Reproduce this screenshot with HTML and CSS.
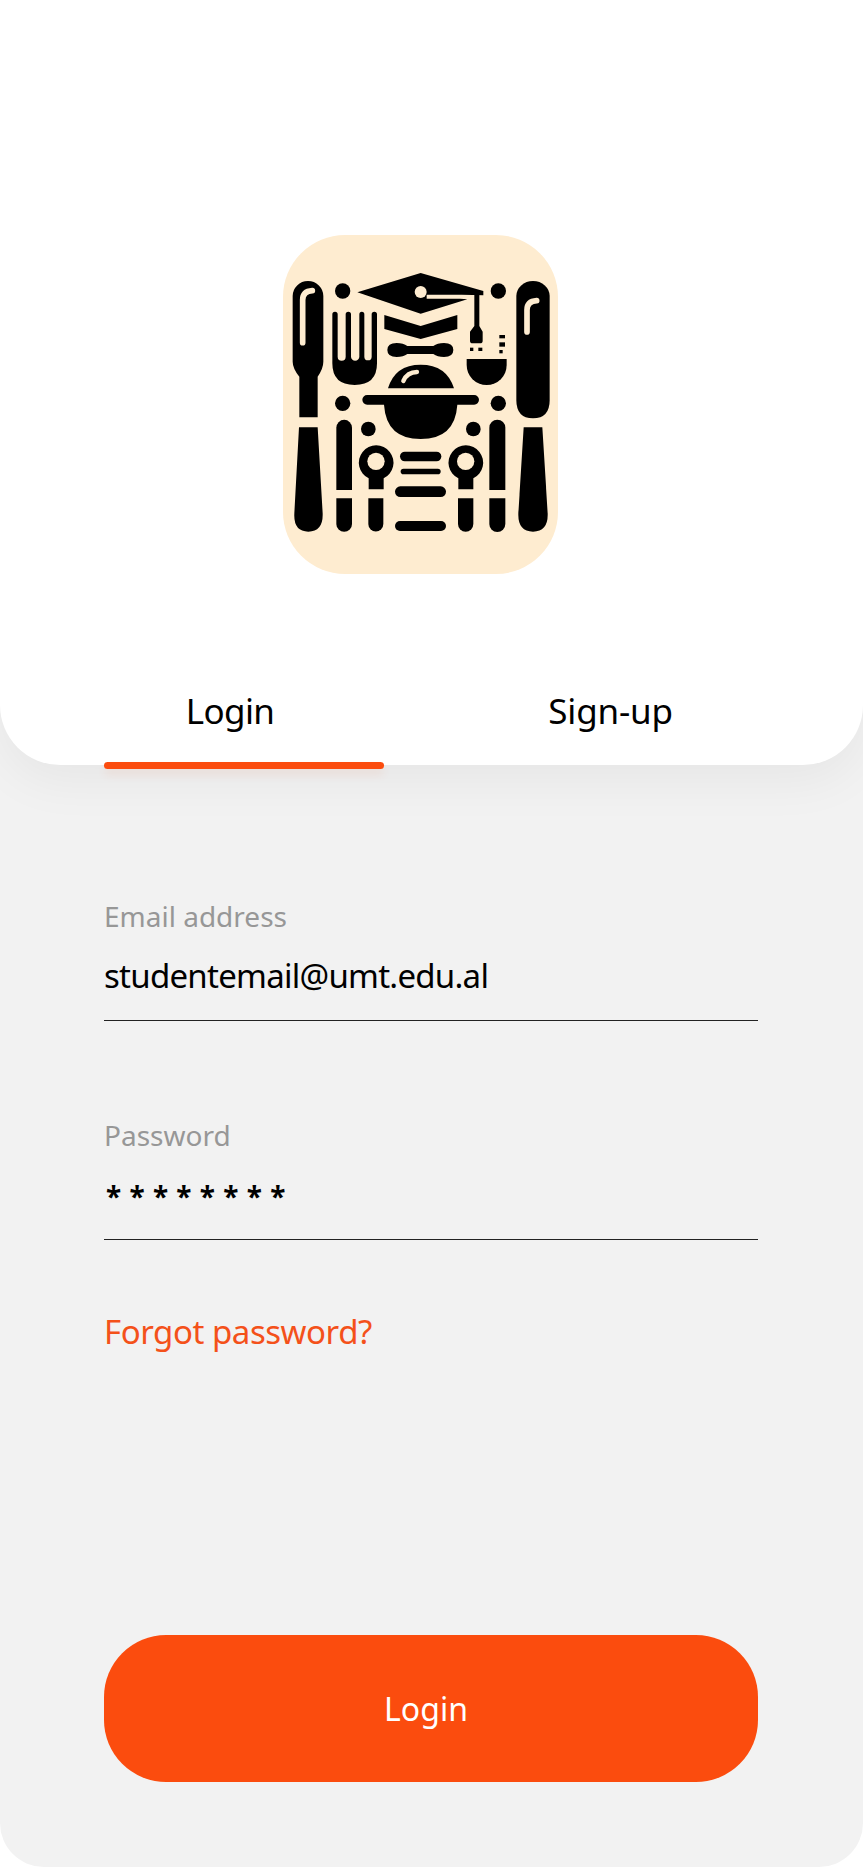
FILE: index.html
```html
<!DOCTYPE html>
<html lang="en">
<head>
<meta charset="utf-8">
<title>Login</title>
<link rel="stylesheet" href="styles.css">
</head>
<body>
<main class="screen">
  <header class="top-card">
    <div class="logo">
      <svg class="logo-art" viewBox="40 45 823 1017" xmlns="http://www.w3.org/2000/svg" aria-hidden="true">
        <g fill="#000">
          <path d="M68 228a46 45 0 0 1 92 0V425Q160 445 143 470V592H88V470Q68 445 68 425Z"/>
          <path d="M87 622H143L158 880Q160 935 115 935Q70 935 73 880Z"/>
          <path d="M739 228a50 45 0 0 1 100 0V540Q839 595 789 595Q739 595 739 540Z"/>
          <path d="M761 622H817L833 880Q835 935 789 935Q743 935 745 880Z"/>
          <circle cx="218" cy="213" r="23"/><circle cx="685" cy="213" r="23"/>
          <circle cx="218" cy="550" r="23"/><circle cx="685" cy="550" r="23"/>
          <circle cx="295" cy="627" r="22"/><circle cx="610" cy="627" r="22"/>
          <path d="M187 283a8 8 0 0 1 16 0V410a12 12 0 0 0 24 0V283a8 8 0 0 1 16 0V410a12.500 12.500 0 0 0 25 0V283a7.500 7.500 0 0 1 15 0V410a11 11 0 0 0 22 0V283a8 8 0 0 1 16 0V430Q321 495 254 495Q187 495 187 430Z"/>
          <path d="M262 217L452 159L640 213V226L575 224H470V236H570L592 238L452 281Z"/>
          <path d="M343 285L452 318L562 285V327L452 357L343 327Z"/>
          <path d="M352 390Q352 369 380 369Q400 369 412 378H490Q502 369 522 369Q550 369 550 390Q550 411 522 411Q502 411 490 402H412Q400 411 380 411Q352 411 352 390Z"/>
          <path d="M354 505Q375 434 452 434Q530 434 552 505Z"/>
          <path d="M291.500 525H612.500a14.500 14.500 0 0 1 0 29H562Q555 657 452 657Q349 657 342 554H291.500a14.500 14.500 0 0 1 0-29Z"/>
          <path d="M199 623a23.500 23.500 0 0 1 47 0V810H199Z"/>
          <path d="M199 835H246V912a23.500 23.500 0 0 1-47 0Z"/>
          <path d="M295 835H340V912a22.500 22.500 0 0 1-45 0Z"/>
          <path d="M564 835H610V912a23 23 0 0 1-46 0Z"/>
          <path d="M658 623a24 24 0 0 1 48 0V810H658Z"/>
          <path d="M658 835H706V912a24 24 0 0 1-48 0Z"/>
          <path d="M296 775a52 52 0 1 1 45 0V808H296Z"/>
          <path d="M565 775a52 52 0 1 1 45 0V808H565Z"/>
          <rect x="390" y="695" width="124" height="29" rx="14.500"/>
          <rect x="392" y="746" width="120" height="17" rx="8.500"/>
          <rect x="375" y="799" width="153" height="32" rx="16"/>
          <rect x="375" y="903" width="153" height="30" rx="15"/>
          <path d="M590 417H710V435a60 60 0 0 1-120 0Z"/>
          <path d="M613 222H628V318L638 335V362Q638 370 630 370H608Q600 370 600 362V335L613 318Z"/>
          <rect x="600" y="383" width="10" height="10"/><rect x="625" y="383" width="12" height="10"/>
          <rect x="688" y="345" width="17" height="10"/><rect x="688" y="367" width="17" height="13"/><rect x="688" y="390" width="10" height="10"/>
        </g>
        <g fill="none" stroke="#feecd0" stroke-linecap="round" stroke-linejoin="round">
          <path d="M98 368V240Q98 214 127 212" stroke-width="17"/>
          <path d="M771 336V270Q771 244 800 242" stroke-width="17"/>
          <path d="M400 483Q412 456 441 456" stroke-width="13"/>
        </g>
        <circle cx="452" cy="216" r="18" fill="#feecd0"/>
        <circle cx="318" cy="724" r="26" fill="#feecd0"/>
        <circle cx="587" cy="724" r="26" fill="#feecd0"/>
      </svg>
    </div>
    <nav class="tabs">
      <a class="tab tab-active">Login</a>
      <a class="tab">Sign-up</a>
    </nav>
  </header>
  <form class="form">
    <div class="field">
      <label class="field-label">Email address</label>
      <div class="field-value">studentemail@umt.edu.al</div>
    </div>
    <div class="field field-second">
      <label class="field-label">Password</label>
      <div class="field-value field-secret">* * * * * * * *</div>
    </div>
    <a class="forgot">Forgot password?</a>
    <button class="submit" type="button">Login</button>
  </form>
</main>
</body>
</html>
```

FILE: styles.css
```css
* { box-sizing: border-box; }
html, body { margin: 0; background: #fff; }
body { font-family: "Noto Sans", "Open Sans", sans-serif; }
.screen {
  width: 863px;
  height: 1867px;
  background: #f2f2f2;
  border-radius: 0 0 44px 44px;
  display: flex;
  flex-direction: column;
  overflow: hidden;
}
.top-card {
  height: 765px;
  background: #fff;
  border-radius: 0 0 60px 60px;
  box-shadow: 0 16px 50px rgba(0, 0, 0, 0.05);
  padding-top: 235px;
  display: flex;
  flex-direction: column;
}
.logo {
  width: 275px;
  height: 339px;
  margin-left: 283px;
  background: #feecd0;
  border-radius: 62px;
}
.logo-art { display: block; width: 100%; height: 100%; }
.tabs {
  margin-top: 112px;
  padding: 0 105px 0 104px;
  display: flex;
  flex: 1;
}
.tab {
  flex: 0 0 280px;
  position: relative;
  padding-right: 28px;
  font-size: 35px;
  letter-spacing: -0.6px;
  line-height: 50px;
  text-align: center;
  color: #000;
}
.tab + .tab { margin-left: 89px; flex-basis: 275px; padding-right: 0; letter-spacing: -0.2px; }
.tab-active::after {
  content: "";
  position: absolute;
  left: 0;
  right: 0;
  top: 76px;
  height: 7px;
  background: #fb4c0e;
  border-radius: 4px;
  box-shadow: 0 6px 8px rgba(251, 76, 14, 0.08);
}
.form {
  flex: 1;
  padding: 0 105px 85px 104px;
  display: flex;
  flex-direction: column;
}
.field {
  margin-top: 130px;
  height: 126px;
  border-bottom: 1px solid #222;
}
.field-second { margin-top: 93px; }
.field-label {
  display: block;
  padding-top: 1px;
  font-size: 28px;
  line-height: 40px;
  color: #979797;
}
.field-value {
  margin-top: 16px;
  font-size: 33px;
  letter-spacing: -0.74px;
  line-height: 48px;
  color: #000;
}
.field-secret { font-size: 28px; font-weight: 700; letter-spacing: 0.5px; padding-left: 2px; padding-top: 1px; }
.forgot {
  margin-top: 69px;
  font-size: 33px;
  letter-spacing: -0.45px;
  line-height: 46px;
  color: #f4511a;
}
.submit {
  margin-top: auto;
  height: 147px;
  border: 0;
  border-radius: 62px;
  background: #fb4c0e;
  color: #fff;
  font: inherit;
  font-size: 32px;
  padding: 0 10px 0 0;
}
```
